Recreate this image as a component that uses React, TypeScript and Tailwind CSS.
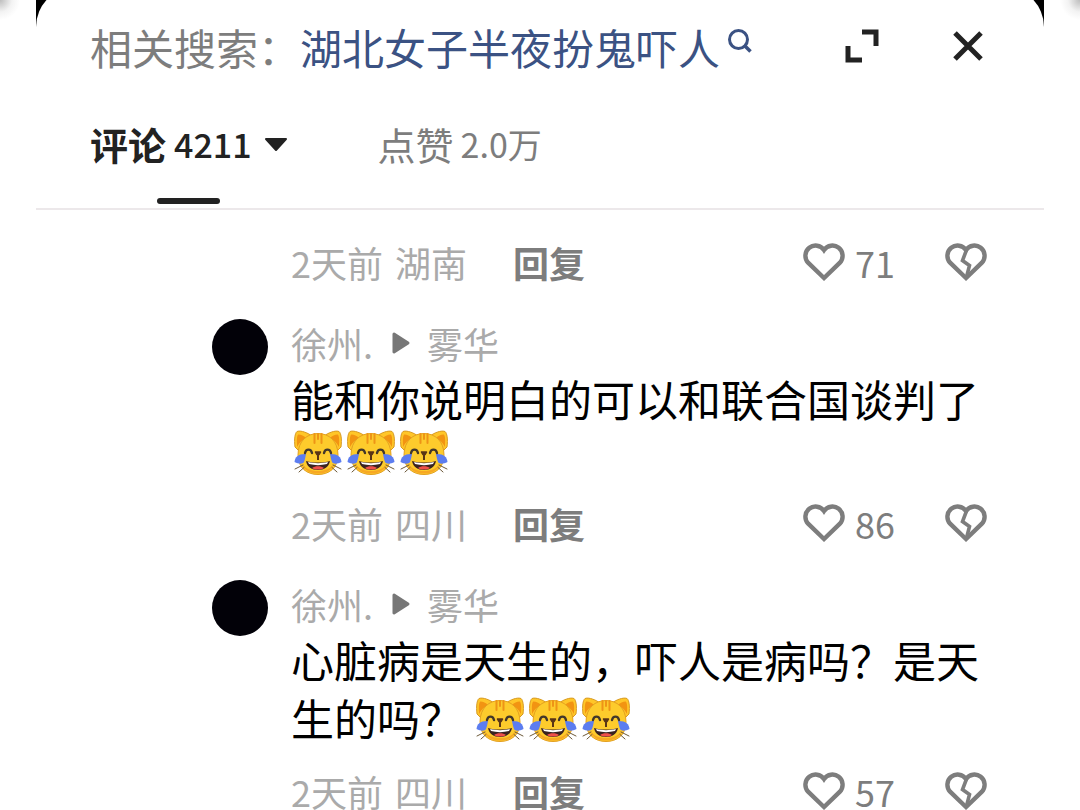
import type React from "react"

interface CommentMeta {
  time: string
  region: string
  likes: number
}

const CatJoy: React.FC = () => (
  <svg role="img" aria-label="笑哭猫" viewBox="0 0 48 46" className="block h-[46px] w-12 shrink-0">
    <path d="M1 17C0 9 1 3 3 1.5C7 0 14 3 18 6L6 22Z" fill="#ffc628" stroke="#d79a24" strokeWidth="1" />
    <path d="M47 17C48 9 47 3 45 1.5C41 0 34 3 30 6L42 22Z" fill="#ffc628" stroke="#d79a24" strokeWidth="1" />
    <path d="M3 15C2.500 9 3 5 4.500 4.500C7 4.500 10 6 12 8C8 10 5 13 3 17Z" fill="#f29412" />
    <path d="M45 15C45.500 9 45 5 43.500 4.500C41 4.500 38 6 36 8C40 10 43 13 45 17Z" fill="#f29412" />
    <path d="M24 3.500C35 3.500 44 11 44 25C44 38 35 44.500 24 44.500C13 44.500 4 38 4 25C4 11 13 3.500 24 3.500Z" fill="#fdcb2c" stroke="#e3a021" strokeWidth="1" />
    <path d="M7 33C11 42 18 43.500 24 43.500C30 43.500 37 42 41 33C36 39 31 41 24 41C17 41 12 39 7 33Z" fill="#f7a823" />
    <path d="M20.500 4V13M27.500 4V13M24 4V9" stroke="#ee9416" strokeWidth="2" strokeLinecap="round" />
    <path d="M1 39L9 35M47 39L39 35M5 42L10 37.500M43 42L38 37.500" stroke="#6d5a3a" strokeWidth="1" strokeLinecap="round" />
    <path d="M11 24C4 24 1 27 0.500 32C5 34.500 9 34 10 32C11 29 11.500 27 12 24Z" fill="#5c7df0" />
    <path d="M37 24C44 24 47 27 47.500 32C43 34.500 39 34 38 32C37 29 36.500 27 36 24Z" fill="#5c7df0" />
    <path d="M11 23C12 18.500 17 18.500 18 23M30 23C31 18.500 36 18.500 37 23" fill="none" stroke="#42372b" strokeWidth="2.400" strokeLinecap="round" />
    <path d="M21.500 22H26.500L25 24.500H23Z" fill="#5a3516" stroke="#5a3516" strokeWidth="1.500" strokeLinejoin="round" />
    <path d="M24 25V30" stroke="#5a3516" strokeWidth="2" />
    <path d="M12 31C19 33 29 33 36 31C35 37 30 40 24 40C18 40 13 37 12 31Z" fill="#3a2320" />
    <path d="M14 32C20 33.500 28 33.500 34 32L33 34C27 35.500 21 35.500 15 34Z" fill="#ffffff" />
    <path d="M18 38C21 35.500 27 35.500 30 38C27 40 21 40 18 38Z" fill="#f0504a" />
  </svg>
)

const Cats: React.FC = () => (
  <span className="ml-[3px] inline-flex gap-[5px] align-[-7px]">
    <CatJoy />
    <CatJoy />
    <CatJoy />
  </span>
)

const HEART = "M21 35L5.100 19.700A10.200 10.200 0 1 1 21 7A10.200 10.200 0 1 1 36.900 19.700Z"

const Heart: React.FC<{ broken?: boolean }> = ({ broken }) => (
  <svg
    aria-hidden="true"
    viewBox="0 0 42 38"
    className="h-[38px] w-[42px] shrink-0"
    fill="none"
    stroke="#7d7d7d"
    strokeWidth="4.400"
  >
    <path d={HEART} />
    {broken && <path d="M21.500 7L17.500 17.500L24.500 22.500L21.500 34" strokeWidth="3.600" />}
  </svg>
)

const MetaRow: React.FC<CommentMeta> = ({ time, region, likes }) => (
  <div className="flex h-11 items-center pl-[79px] text-4xl leading-[44px]">
    <span className="flex gap-3 text-[#aaaaaa]">
      <span>{time}</span>
      <span>{region}</span>
    </span>
    <button type="button" className="ml-[46px] font-bold text-[#7d7d7d]">
      回复
    </button>
    <button
      type="button"
      aria-label={`赞 ${likes}`}
      className="ml-auto flex w-[142px] items-center gap-2.5 text-[#7d7d7d]"
    >
      <Heart />
      {likes}
    </button>
    <button type="button" aria-label="不喜欢">
      <Heart broken />
    </button>
  </div>
)

const Comment: React.FC<CommentMeta & { children: React.ReactNode }> = ({ children, ...meta }) => (
  <li>
    <div className="flex h-11 items-center text-4xl text-[#aaaaaa]">
      <span className="mt-2 size-14 shrink-0 rounded-full bg-[#020108]" />
      <span className="ml-[23px]">徐州.</span>
      <svg aria-hidden="true" viewBox="0 0 20 24" className="mr-4 ml-[18px] h-6 w-5">
        <path d="M3 3L17 12L3 21Z" fill="#777777" stroke="#777777" strokeWidth="3" strokeLinejoin="round" />
      </svg>
      <span>雾华</span>
    </div>
    <div className="mt-1 mb-[23px] pl-[79px] text-[43px] leading-[58px] text-black">{children}</div>
    <MetaRow {...meta} />
  </li>
)

const SideStrip: React.FC<{ right?: boolean }> = ({ right }) => (
  <div
    className={
      right
        ? "w-9 shrink-0 bg-white bg-[radial-gradient(circle_at_100%_0,#bdbdbd_0,#f3f3f3_12px,#ffffff_20px)]"
        : "w-9 shrink-0 bg-white bg-[radial-gradient(circle_at_0_0,#bdbdbd_0,#f3f3f3_12px,#ffffff_20px)]"
    }
  />
)

const App: React.FC = () => {
  return (
    <div className="flex h-screen overflow-hidden bg-black font-['Noto_Sans_CJK_SC',sans-serif]">
      <SideStrip />
      <main className="-mt-[13px] min-w-0 flex-1 overflow-hidden rounded-t-[40px] bg-white pt-[13px]">
        <header className="flex h-[92px] items-center pl-[54px] pr-[61px] text-[42px] whitespace-nowrap">
          <span className="text-[#7d7d7d]">相关搜索：</span>
          <a href="#search" className="flex text-[#3b5283]">
            湖北女子半夜扮鬼吓人
            <svg aria-hidden="true" viewBox="0 0 24 24" className="mt-3.5 ml-2 size-6" fill="none" stroke="currentColor">
              <circle cx="10.500" cy="10.500" r="9" strokeWidth="3" />
              <path d="M16.500 16.500L22.500 22.500" strokeWidth="3.500" />
            </svg>
          </a>
          <button type="button" aria-label="展开" className="ml-auto">
            <svg aria-hidden="true" viewBox="0 0 34 34" className="size-[34px]" fill="none" stroke="#222222" strokeWidth="5">
              <path d="M17 3H31V17M3 17V31H17" />
            </svg>
          </button>
          <button type="button" aria-label="关闭" className="ml-[74px]">
            <svg aria-hidden="true" viewBox="0 0 30 30" className="size-[30px]" fill="none" stroke="#222222" strokeWidth="5">
              <path d="M2 2L28 28M28 2L2 28" />
            </svg>
          </button>
        </header>

        <nav className="flex h-[118px] items-start gap-[90px] border-b-2 border-[#ece8ea] pl-[54px]">
          <button type="button" className="flex flex-col items-center text-[#222222]">
            <span className="flex h-[106px] items-center gap-2 pb-1">
              <span className="text-[38px] font-bold">评论</span>
              <span className="text-[34px] font-medium">4211</span>
              <svg aria-hidden="true" viewBox="0 0 24 16" className="mt-1 ml-1 h-4 w-6">
                <path d="M2 2H22L12 13Z" fill="#222222" stroke="#222222" strokeWidth="2" strokeLinejoin="round" />
              </svg>
            </span>
            <span className="h-[6px] w-[63px] rounded-full bg-[#222222]" />
          </button>
          <button type="button" className="flex h-[106px] items-center gap-[7px] pb-1 text-[#7d7d7d]">
            <span className="text-[38px]">点赞</span>
            <span className="text-[34px]">2.0万</span>
          </button>
        </nav>

        <ul className="flex flex-col gap-[37px] pt-[30px] pr-[57px] pl-44">
          <li>
            <MetaRow time="2天前" region="湖南" likes={71} />
          </li>
          <Comment time="2天前" region="四川" likes={86}>
            <p>能和你说明白的可以和联合国谈判了</p>
            <p className="flex h-[51px] items-center">
              <Cats />
            </p>
          </Comment>
          <Comment time="2天前" region="四川" likes={57}>
            <p>
              心脏病是天生的，吓人是病吗？是天生的吗？ <Cats />
            </p>
          </Comment>
        </ul>
      </main>
      <SideStrip right />
    </div>
  )
}

export default App
